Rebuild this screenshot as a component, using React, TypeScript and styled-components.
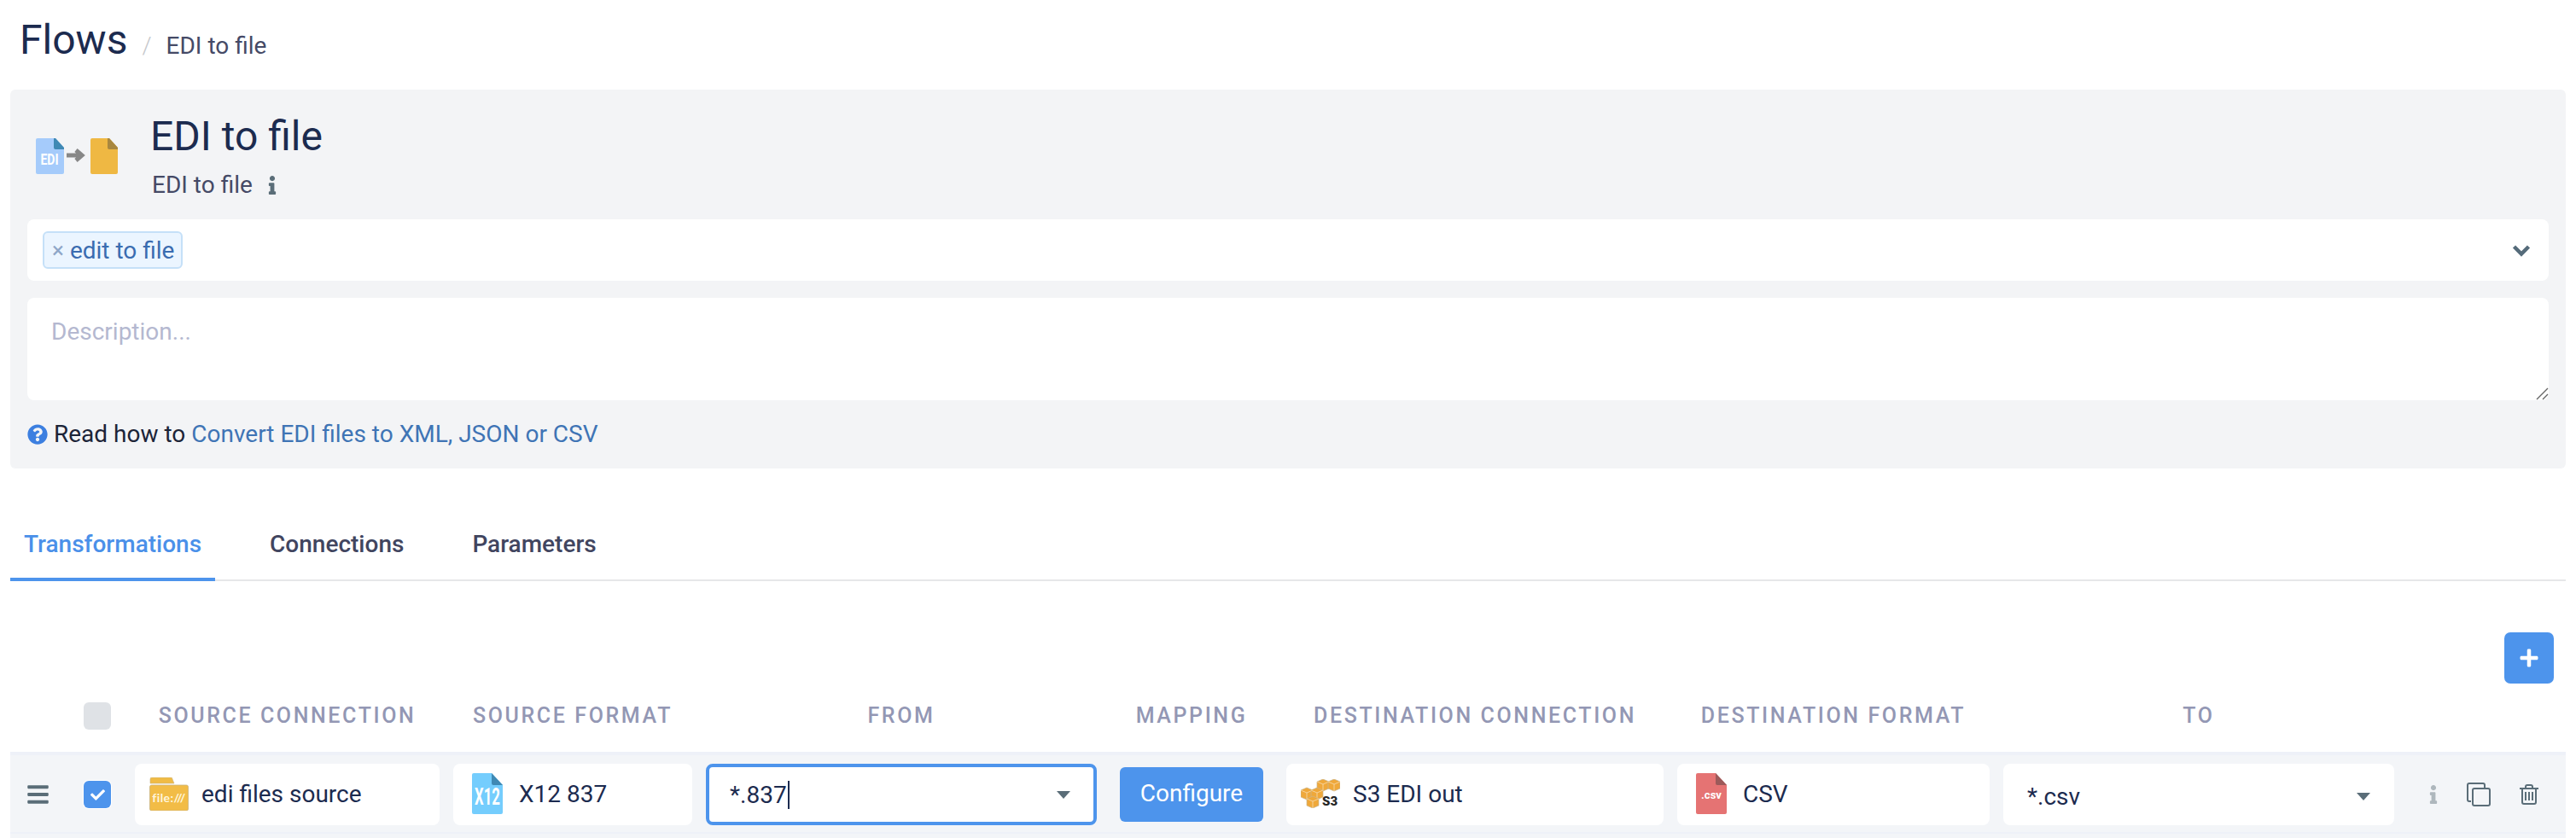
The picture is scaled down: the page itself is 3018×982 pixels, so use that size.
import {FC} from "react";
import styled, {createGlobalStyle} from "styled-components";
import {FaBars, FaCheck, FaInfo, FaPlus, FaQuestionCircle} from "react-icons/fa";

const GlobalStyle = createGlobalStyle`
	html,
	body {
		margin: 0;
		padding: 0;
		background: #fff;
		overflow: hidden;
	}

	* {
		box-sizing: border-box;
	}

	body {
		font-family: Roboto, "Liberation Sans", sans-serif;
		color: #1c2b4f;
	}
`;

const Page = styled.div`
	width: 3018px;
	height: 982px;
	padding: 0 12px;
	overflow: hidden;
`;

const Breadcrumb = styled.div`
	height: 105px;
	padding: 17px 11px 0;
	display: flex;
	align-items: baseline;
`;

const PageTitle = styled.h1`
	margin: 0;
	font-size: 48px;
	line-height: 60px;
	font-weight: 400;
	color: #1c2b4f;
`;

const Slash = styled.span`
	margin: 0 17px 0 17px;
	font-size: 28px;
	font-weight: 300;
	color: #c6c8cc;
`;

const Crumb = styled.span`
	font-size: 28px;
	color: #454a66;
`;

const Panel = styled.section`
	height: 444px;
	padding: 0 20px;
	background: #f3f4f6;
	border-radius: 6px;
`;

const FlowHead = styled.div`
	height: 152px;
	display: flex;
	align-items: flex-start;
`;

const FlowIcon = styled.svg`
	flex: none;
	width: 106px;
	height: 42px;
	margin: 57px 0 0 10px;
`;

const FlowText = styled.div`
	margin: 23px 0 0 30px;
`;

const FlowTitle = styled.h2`
	margin: 0 0 0 -2px;
	font-size: 48px;
	line-height: 64px;
	font-weight: 400;
	color: #1c2b4f;
`;

const FlowSub = styled.div`
	margin-top: 5px;
	display: flex;
	align-items: center;
	gap: 16px;
	font-size: 28px;
	line-height: 40px;
	color: #454a66;

	svg {
		width: 14px;
		height: 22px;
		color: #5a6d78;
	}
`;

const TagField = styled.div`
	height: 72px;
	padding: 0 21px 0 18px;
	display: flex;
	align-items: center;
	justify-content: space-between;
	background: #fff;
	border-radius: 8px;
`;

const Tag = styled.span`
	height: 44px;
	padding: 0 8px 0 9px;
	display: inline-flex;
	align-items: center;
	gap: 7px;
	background: #ebf5ff;
	border: 2px solid #c5e0f8;
	border-radius: 6px;
	font-size: 28px;
	color: #3a6cb0;
`;

const TagRemove = styled.span`
	color: #8ea6c8;
	font-size: 26px;
`;

const Description = styled.textarea`
	display: block;
	width: 100%;
	height: 120px;
	margin-top: 20px;
	padding: 20px 28px;
	background: #fff;
	border: none;
	border-radius: 8px;
	outline: none;
	font-family: inherit;
	font-size: 28px;
	line-height: 40px;

	&::placeholder {
		color: #b4b8d0;
	}

	&::-webkit-resizer {
		background: url("data:image/svg+xml,%3Csvg xmlns='http://www.w3.org/2000/svg' width='15' height='15'%3E%3Cpath d='M1 14L14 1M8 14l6-6' stroke='%23666' stroke-width='1.4' fill='none'/%3E%3C/svg%3E") no-repeat;
	}
`;

const HelpLine = styled.div`
	margin-top: 20px;
	display: flex;
	align-items: center;
	gap: 7px;
	font-size: 28px;
	line-height: 40px;
	color: #1c2438;

	svg {
		flex: none;
		width: 24px;
		height: 24px;
		color: #3c7fe0;
	}
`;

const HelpLink = styled.a`
	color: #3f74b5;
	text-decoration: none;
`;

const Tabs = styled.nav`
	margin-top: 69px;
	height: 63px;
	display: flex;
	border-bottom: 2px solid #e6e7e9;
`;

const Tab = styled.div<{$active?: boolean}>`
	height: 63px;
	margin-right: 48px;
	padding: 0 16px;
	line-height: 40px;
	font-size: 28px;
	font-weight: 500;
	color: ${p => (p.$active ? "#4a90e9" : "#41455f")};
	border-bottom: ${p => (p.$active ? "4px solid #4d94ec" : "none")};
`;

const Toolbar = styled.div`
	height: 120px;
	padding: 60px 14px 0 0;
	display: flex;
	justify-content: flex-end;
`;

const AddButton = styled.button`
	width: 58px;
	height: 60px;
	padding: 0;
	display: flex;
	align-items: center;
	justify-content: center;
	background: #4d94ec;
	border: none;
	border-radius: 7px;
	color: #fff;

	svg {
		width: 24px;
		height: 24px;
	}
`;

const columns = "70px 44px 357px 280px 458px 190px 442px 366px 458px 1fr";

const HeadRow = styled.div`
	height: 80px;
	padding-top: 22px;
	display: grid;
	grid-template-columns: ${columns};
	column-gap: 16px;
	align-items: start;
`;

const HeadCell = styled.div<{$col: number}>`
	grid-column: ${p => p.$col};
	margin-top: 1px;
	text-align: center;
	font-size: 25px;
	line-height: 30px;
	font-weight: 500;
	letter-spacing: 2.6px;
	color: #9397b4;
	white-space: nowrap;
`;

const Check = styled.span<{$checked?: boolean}>`
	grid-column: 2;
	width: 32px;
	height: 32px;
	display: flex;
	align-items: center;
	justify-content: center;
	border-radius: 6px;
	background: ${p => (p.$checked ? "#4d94ec" : "#dfe2e6")};
	box-shadow: ${p => (p.$checked ? "0 0 0 1px #fff" : "none")};
	color: #fff;

	svg {
		width: 17px;
		height: 17px;
	}
`;

const Row = styled.div`
	height: 96px;
	padding-top: 10px;
	display: grid;
	grid-template-columns: ${columns};
	grid-template-rows: 72px;
	column-gap: 16px;
	align-items: center;
	background: #f3f5f8;
	border-top: 4px solid #eef1f8;
	border-bottom: 2px solid #eef1f8;
`;

const NextRow = styled.div`
	height: 10px;
	background: #f3f5f8;
`;

const Handle = styled.span`
	padding-left: 20px;
	display: flex;
	color: #5a6d78;

	svg {
		width: 25px;
		height: 28px;
	}
`;

const Cell = styled.div`
	height: 72px;
	display: flex;
	align-items: center;
	background: #fff;
	border-radius: 8px;
	font-size: 28px;
	color: #1c2b4f;
	white-space: nowrap;
`;

const IconCell = styled(Cell)<{$inset: number; $gap: number}>`
	padding-left: ${p => p.$inset}px;
	padding-bottom: 2px;
	gap: ${p => p.$gap}px;
`;

const SelectCell = styled(Cell)<{$focused?: boolean}>`
	padding: ${p => (p.$focused ? "0 27px 0 24px" : "4px 28px 0 28px")};
	border: ${p => (p.$focused ? "4px solid #4d94ec" : "none")};
`;

const Caret = styled.span`
	width: 2px;
	height: 33px;
	margin-left: 1px;
	background: #1c2b4f;
`;

const DropArrow = styled.span`
	margin-left: auto;
	width: 0;
	height: 0;
	border-left: 8px solid transparent;
	border-right: 8px solid transparent;
	border-top: 9px solid #5a6d78;
`;

const ConfigureCell = styled.div`
	display: flex;
	justify-content: center;
`;

const ConfigureButton = styled.button`
	width: 168px;
	height: 64px;
	padding: 0 0 4px;
	background: #4d94ec;
	border: none;
	border-radius: 6px;
	font-family: inherit;
	font-size: 28px;
	color: #fff;
`;

const Actions = styled.div`
	display: flex;
	align-items: center;
	padding-left: 23px;
`;

const InfoAction = styled.span`
	display: flex;
	color: #aeb7bd;

	svg {
		width: 14px;
		height: 22px;
	}
`;

const ActionIcon = styled.svg<{$gap: number}>`
	margin-left: ${p => p.$gap}px;
	fill: none;
	stroke: #5a6d78;
	stroke-width: 2;
`;

const IconText = styled.text<{$size: number}>`
	fill: #fff;
	font-family: Roboto, sans-serif;
	font-weight: 700;
	font-size: ${p => p.$size}px;
	text-anchor: middle;
`;

// labels on the file badges are tall and narrow, so squeeze them sideways
const FileDoc: FC<{
	fill: string;
	fold: string;
	label: string;
	size: number;
	y: number;
	squeeze: number;
}> = ({fill, fold, label, size, y, squeeze}) => (
	<svg width="36" height="48" viewBox="0 0 36 48">
		<path d="M2 0h21l13 14v32a2 2 0 0 1-2 2H2a2 2 0 0 1-2-2V2a2 2 0 0 1 2-2z" fill={fill} />
		<path d="M23 0l13 14H25a2 2 0 0 1-2-2z" fill={fold} />
		<IconText transform={`translate(18 ${y}) scale(${squeeze} 1)`} $size={size}>
			{label}
		</IconText>
	</svg>
);

const FolderIcon: FC = () => (
	<svg width="46" height="39" viewBox="0 0 46 39">
		<path d="M1 7V2a2 2 0 0 1 2-2h22a2 2 0 0 1 2 2l2 5z" fill="#f0bb45" stroke="#c9b27c" strokeWidth="0.6" />
		<rect x="0.5" y="9" width="45" height="30" rx="2" fill="#f2bc46" stroke="#c9b27c" strokeWidth="0.8" />
		<text
			x="23"
			y="29"
			textAnchor="middle"
			fill="#fff6dc"
			fontFamily="Lato, sans-serif"
			fontWeight="700"
			fontSize="14"
			letterSpacing="0.4"
		>
			file:///
		</text>
	</svg>
);

const Cube: FC<{x: number; y: number}> = ({x, y}) => (
	<g transform={`translate(${x} ${y})`}>
		<path d="M7 0l7 3v8l-7 3-7-3V3z" fill="#efa83a" stroke="#c9b68f" strokeWidth="0.7" />
		<path d="M0 3l7 3 7-3M7 6v8" fill="none" stroke="#f7dcae" strokeWidth="0.8" />
	</g>
);

const S3Icon: FC = () => (
	<svg width="46" height="34" viewBox="0 0 46 34">
		<Cube x={19} y={0} />
		<Cube x={32} y={0} />
		<Cube x={0} y={10} />
		<Cube x={12} y={10} />
		<Cube x={7} y={20} />
		<text x="25" y="31" fill="#262626" fontFamily="Roboto, sans-serif" fontWeight="900" fontSize="15">
			S3
		</text>
	</svg>
);

const ChevronIcon: FC = () => (
	<svg width="22" height="15" viewBox="0 0 22 15">
		<path d="M2.5 3L11 11.5 19.5 3" fill="none" stroke="#556b7a" strokeWidth="4.5" />
	</svg>
);

const headers = [
	{col: 3, label: "SOURCE CONNECTION"},
	{col: 4, label: "SOURCE FORMAT"},
	{col: 5, label: "FROM"},
	{col: 6, label: "MAPPING"},
	{col: 7, label: "DESTINATION CONNECTION"},
	{col: 8, label: "DESTINATION FORMAT"},
	{col: 9, label: "TO"},
];

const App: FC = () => {
	return (
		<Page>
			<GlobalStyle />
			<Breadcrumb>
				<PageTitle>Flows</PageTitle>
				<Slash>/</Slash>
				<Crumb>EDI to file</Crumb>
			</Breadcrumb>

			<Panel>
				<FlowHead>
					{/* edi doc -> file doc */}
					<FlowIcon viewBox="0 0 106 42">
						<path d="M2 0h21l10 11v29a2 2 0 0 1-2 2H2a2 2 0 0 1-2-2V2a2 2 0 0 1 2-2z" fill="#a5cbfb" />
						<path d="M21 0h2l10 11v2H23a2 2 0 0 1-2-2z" fill="#3f89b4" />
						<IconText transform="translate(16 31) scale(0.78 1)" $size={18}>
							EDI
						</IconText>
						<path d="M36 20h17M47 14l7 6-7 6" fill="none" stroke="#878787" strokeWidth="5" />
						<path d="M66 0h20l10 11v29a2 2 0 0 1-2 2H66a2 2 0 0 1-2-2V2a2 2 0 0 1 2-2z" fill="#efb843" />
						<path d="M84 0h2l10 11v2H86a2 2 0 0 1-2-2z" fill="#a8873f" />
					</FlowIcon>
					<FlowText>
						<FlowTitle>EDI to file</FlowTitle>
						<FlowSub>
							EDI to file <FaInfo />
						</FlowSub>
					</FlowText>
				</FlowHead>

				<TagField>
					<Tag>
						<TagRemove>×</TagRemove>edit to file
					</Tag>
					<ChevronIcon />
				</TagField>

				<Description placeholder="Description..." />

				<HelpLine>
					<FaQuestionCircle />
					<span>
						Read how to <HelpLink href="#">Convert EDI files to XML, JSON or CSV</HelpLink>
					</span>
				</HelpLine>
			</Panel>

			<Tabs>
				<Tab $active>Transformations</Tab>
				<Tab>Connections</Tab>
				<Tab>Parameters</Tab>
			</Tabs>

			<Toolbar>
				<AddButton>
					<FaPlus />
				</AddButton>
			</Toolbar>

			<HeadRow>
				<Check />
				{headers.map(h => (
					<HeadCell key={h.label} $col={h.col}>
						{h.label}
					</HeadCell>
				))}
			</HeadRow>

			<Row>
				<Handle>
					<FaBars />
				</Handle>
				<Check $checked>
					<FaCheck />
				</Check>
				<IconCell $inset={17} $gap={15}>
					<FolderIcon />
					<span>edi files source</span>
				</IconCell>
				<IconCell $inset={22} $gap={19}>
					<FileDoc fill="#74cdfd" fold="#3f89b4" label="X12" size={27} y={37} squeeze={0.62} />
					<span>X12 837</span>
				</IconCell>
				<SelectCell $focused>
					<span>*.837</span>
					<Caret />
					<DropArrow />
				</SelectCell>
				<ConfigureCell>
					<ConfigureButton>Configure</ConfigureButton>
				</ConfigureCell>
				<IconCell $inset={17} $gap={15}>
					<S3Icon />
					<span>S3 EDI out</span>
				</IconCell>
				<IconCell $inset={22} $gap={19}>
					<FileDoc fill="#e57373" fold="#9c5a5a" label=".csv" size={13} y={30} squeeze={1} />
					<span>CSV</span>
				</IconCell>
				<SelectCell>
					<span>*.csv</span>
					<DropArrow />
				</SelectCell>
				<Actions>
					<InfoAction>
						<FaInfo />
					</InfoAction>
					<ActionIcon $gap={32} width="28" height="28" viewBox="0 0 28 28">
						<path d="M5 22H3a2 2 0 0 1-2-2V3a2 2 0 0 1 2-2h16a2 2 0 0 1 2 2v3" />
						<rect x="7" y="7" width="20" height="20" rx="2" />
					</ActionIcon>
					<ActionIcon $gap={34} width="22" height="24" viewBox="0 0 22 24">
						<path d="M0 5h22M7 5V3a2 2 0 0 1 2-2h4a2 2 0 0 1 2 2v2M3 5v16a2 2 0 0 0 2 2h12a2 2 0 0 0 2-2V5M7 9v10M11 9v10M15 9v10" />
					</ActionIcon>
				</Actions>
			</Row>
			<NextRow />
		</Page>
	);
};

export default App;
